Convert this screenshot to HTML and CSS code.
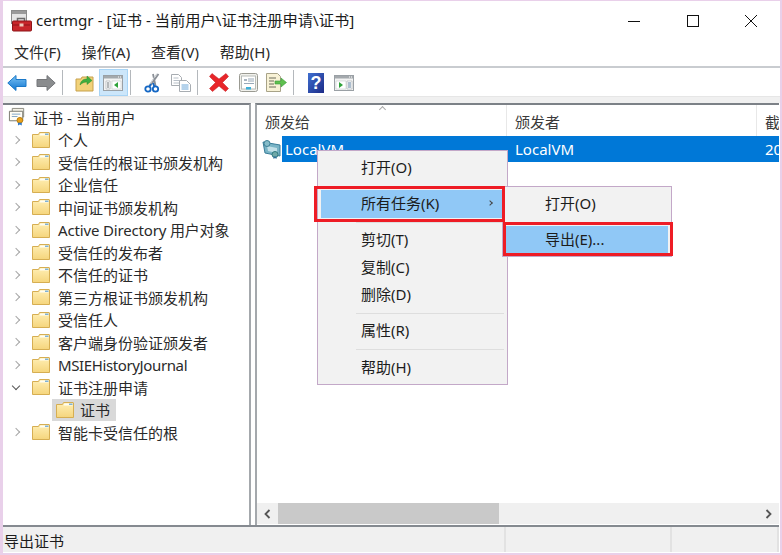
FILE: index.html
```html
<!DOCTYPE html>
<html lang="zh-CN">
<head>
<meta charset="utf-8">
<title>certmgr</title>
<link rel="stylesheet" href="styles.css">
</head>
<body>
<svg class="defs" width="0" height="0" aria-hidden="true">
  <defs>
    <linearGradient id="gf" x1="0" y1="0" x2="0" y2="1"><stop offset="0" stop-color="#ffefb5"/><stop offset="1" stop-color="#f5d57c"/></linearGradient>
    <linearGradient id="gb" x1="0" y1="0" x2="0" y2="1"><stop offset="0" stop-color="#7cc4f5"/><stop offset="1" stop-color="#0f74cf"/></linearGradient>
    <linearGradient id="gh" x1="0" y1="0" x2="1" y2="1"><stop offset="0" stop-color="#3f6fd0"/><stop offset="1" stop-color="#1c2a86"/></linearGradient>
    <symbol id="folder" viewBox="0 0 18 18">
      <path d="M.5 3.500h6l1-2h9.500a.5.5 0 0 1 .5.5v14.500H.5z" fill="url(#gf)" stroke="#d6ae52"/>
      <path d="M8.500 2.500h8v2h-9z" fill="#fffdf2"/>
      <path d="M13 2.500h3.500v1.500H13z" fill="#7fb2d6"/>
    </symbol>
    <symbol id="cert" viewBox="0 0 20 20">
      <path d="M4.500 1.500h12v9h-12z" fill="#f4f1e6" stroke="#8a8a80"/>
      <path d="M1.500 4.500h14v10h-14z" fill="#fffdf5" stroke="#77776d"/>
      <path d="M4 7.500h9M4 10h6" stroke="#7da4c8"/>
      <circle cx="12.500" cy="14" r="3" fill="#e9a21b" stroke="#b67a0a"/>
      <path d="M10.500 16.500v3l2-1 2 1v-3z" fill="#2f79c9"/>
    </symbol>
    <symbol id="certlist" viewBox="0 0 20 20">
      <path d="M1 3l17 3v11L3 14z" fill="#79b4c6" stroke="#3a7d99"/>
      <path d="M5 7l10 2v5L6 12z" fill="#c2e0e8"/>
      <circle cx="5" cy="4.500" r="3" fill="#86bcc9" stroke="#3f8096"/>
      <circle cx="13" cy="15.500" r="3" fill="#6fa8a8" stroke="#2f7a80"/>
      <path d="M11.500 17.500v2.500l1.500-1 1.500 1v-2.500z" fill="#2f6f99"/>
    </symbol>
    <symbol id="win-left" viewBox="0 0 20 16">
      <rect x=".5" y=".5" width="19" height="15" fill="#f3f3f3" stroke="#9aa0a5"/>
      <rect x="1" y="1" width="18" height="2.500" fill="#a4a9ad"/>
      <path d="M15 2h1M17 2h1" stroke="#fff"/>
      <path d="M3 6h4v8H3z" fill="#fff" stroke="#a6abb0" stroke-width=".6"/>
      <path d="M4 8h2M4 10h2M4 12h2" stroke="#6d7377"/>
      <path d="M9 6h9v8H9z" fill="#fff" stroke="#c8cccf" stroke-width=".6"/>
      <path d="M15 7v6l-4-3z" fill="#2fa33a"/>
    </symbol>
    <symbol id="win-right" viewBox="0 0 20 16">
      <rect x=".5" y=".5" width="19" height="15" fill="#f3f3f3" stroke="#9aa0a5"/>
      <rect x="1" y="1" width="18" height="2.500" fill="#a4a9ad"/>
      <path d="M15 2h1M17 2h1" stroke="#fff"/>
      <path d="M2 6h10v8H2z" fill="#fff" stroke="#c8cccf" stroke-width=".6"/>
      <path d="M5 7v6l4-3z" fill="#2fa33a"/>
      <path d="M13 6h5v8h-5z" fill="#fff" stroke="#a6abb0" stroke-width=".6"/>
      <path d="M14 8h3M14 10h3M14 12h3" stroke="#5d7f9f"/>
    </symbol>
  </defs>
</svg>

<div class="window">
  <header class="titlebar">
    <svg class="app-icon" width="21" height="22" viewBox="0 0 21 22">
      <rect x=".5" y=".5" width="15" height="13" fill="#e4e4e4" stroke="#8b8b8b"/>
      <rect x="1" y="1" width="14" height="3" fill="#9a9a9a"/>
      <path d="M6.500 11V8.500h7V11" fill="none" stroke="#6b6b6b" stroke-width="1.500"/>
      <path d="M2.500 11h17a1 1 0 0 1 1 1v8a1 1 0 0 1-1 1h-17a1 1 0 0 1-1-1v-8a1 1 0 0 1 1-1z" fill="#c8262a" stroke="#8d1518"/>
      <path d="M2 15h17" stroke="#8d1518"/>
      <rect x="8.500" y="13.500" width="4" height="3" fill="#f0c8b8"/>
    </svg>
    <span class="title-text">certmgr - [证书 - 当前用户\证书注册申请\证书]</span>
    <div class="controls">
      <svg width="12" height="12" viewBox="0 0 12 12"><path d="M0 6.500h12" stroke="#111"/></svg>
      <svg width="12" height="12" viewBox="0 0 12 12"><rect x=".5" y=".5" width="11" height="11" fill="none" stroke="#111"/></svg>
      <svg width="12" height="12" viewBox="0 0 12 12"><path d="M0 0l12 12M12 0L0 12" stroke="#111"/></svg>
    </div>
  </header>

  <nav class="menubar">
    <span>文件(F)</span><span>操作(A)</span><span>查看(V)</span><span>帮助(H)</span>
  </nav>

  <div class="toolbar">
    <span class="tool"><svg width="20" height="20" viewBox="0 0 20 20"><path d="M.8 10L9 2.500V6.500h10v7H9v4z" fill="url(#gb)" stroke="#1a78c8"/></svg></span>
    <span class="tool"><svg width="20" height="20" viewBox="0 0 20 20"><path d="M19.200 10L11 2.500V6.500H1v7h10v4z" fill="#8a8c8e" stroke="#75777a"/></svg></span>
    <i class="sep"></i>
    <span class="tool"><svg width="19" height="19" viewBox="0 0 19 19"><path d="M1 6h5l1-2h11v14H1z" fill="#f2d27a" stroke="#c7a14c"/><path d="M5 12c1-5 4-6 7-6V3l5 4.500-5 4V9c-3 0-5 1-7 3z" fill="#3fae3f" stroke="#2d8f2d" stroke-width=".5"/></svg></span>
    <span class="tool active"><svg width="20" height="16"><use href="#win-left"/></svg></span>
    <i class="sep"></i>
    <span class="tool"><svg width="16" height="20" viewBox="0 0 16 20"><path d="M14.500 1L6 13M9 1l1.500 7 1 5" stroke="#8b9097" stroke-width="1.800" fill="none"/><path d="M13 .5L5 12" stroke="#c8ccd0"/><circle cx="4" cy="16" r="2.700" fill="#fff" stroke="#1467c4" stroke-width="1.800"/><circle cx="11.500" cy="16" r="2.700" fill="#fff" stroke="#1467c4" stroke-width="1.800"/><path d="M5 14l2-3M10.500 14L9 10" stroke="#1467c4" stroke-width="1.800"/></svg></span>
    <span class="tool"><svg width="20" height="18" viewBox="0 0 20 18"><path d="M.5.500h7l3 3v8H.5z" fill="#fff" stroke="#a8adb2"/><path d="M2.500 4h5M2.500 6.500h6M2.500 9h6" stroke="#b8c0c8"/><path d="M8.500 6.500h7l4 4v7h-11z" fill="#fff" stroke="#a8adb2"/><path d="M10.500 11h7M10.500 13h7M10.500 15h7" stroke="#6aa6d8"/></svg></span>
    <i class="sep"></i>
    <span class="tool"><svg width="20" height="19" viewBox="0 0 20 19"><path d="M3 .5L10 6l7-5.500 2.500 3L13.500 9.500l6 6-3 3L10 13l-6.500 5.500-3-3 6-6-6-6z" fill="#e8262a" stroke="#c01a1e" stroke-width=".5"/></svg></span>
    <span class="tool"><svg width="19" height="19" viewBox="0 0 19 19"><rect x=".5" y=".5" width="18" height="18" rx="2" fill="#f1f1ec" stroke="#9a9a92"/><rect x="2.500" y="3" width="14" height="13" fill="#fff" stroke="#b8bcb8"/><path d="M5 6h3v2H5z" fill="#a8b4c0"/><path d="M9 6h6M9 8h6M5 10.500h10" stroke="#98a8b8"/><rect x="7" y="14" width="5" height="2.500" fill="#3fb0d8"/></svg></span>
    <span class="tool"><svg width="21" height="19" viewBox="0 0 21 19"><path d="M.5.500h11l3 3v15H.5z" fill="#f8f2d6" stroke="#a8a388"/><path d="M3 5h7M3 8h5M3 11h5M3 14h7" stroke="#6d6d5c"/><path d="M9 8h6V5l5.500 4.500L15 14v-3H9z" fill="#5fc04f" stroke="#3c9a3c" stroke-width=".6"/></svg></span>
    <i class="sep"></i>
    <span class="tool"><svg width="16" height="20" viewBox="0 0 16 20"><rect width="16" height="20" fill="url(#gh)"/><text class="help-q" x="8" y="16" text-anchor="middle">?</text></svg></span>
    <span class="tool"><svg width="20" height="16"><use href="#win-right"/></svg></span>
  </div>

  <div class="strip"></div>

  <main class="panes">
    <aside class="tree">
      <div class="row root"><svg width="19" height="19"><use href="#cert"/></svg><span>证书 - 当前用户</span></div>
      <div class="row"><i class="chev"></i><svg width="18" height="18"><use href="#folder"/></svg><span>个人</span></div>
      <div class="row"><i class="chev"></i><svg width="18" height="18"><use href="#folder"/></svg><span>受信任的根证书颁发机构</span></div>
      <div class="row"><i class="chev"></i><svg width="18" height="18"><use href="#folder"/></svg><span>企业信任</span></div>
      <div class="row"><i class="chev"></i><svg width="18" height="18"><use href="#folder"/></svg><span>中间证书颁发机构</span></div>
      <div class="row"><i class="chev"></i><svg width="18" height="18"><use href="#folder"/></svg><span class="tight">Active Directory 用户对象</span></div>
      <div class="row"><i class="chev"></i><svg width="18" height="18"><use href="#folder"/></svg><span>受信任的发布者</span></div>
      <div class="row"><i class="chev"></i><svg width="18" height="18"><use href="#folder"/></svg><span>不信任的证书</span></div>
      <div class="row"><i class="chev"></i><svg width="18" height="18"><use href="#folder"/></svg><span>第三方根证书颁发机构</span></div>
      <div class="row"><i class="chev"></i><svg width="18" height="18"><use href="#folder"/></svg><span>受信任人</span></div>
      <div class="row"><i class="chev"></i><svg width="18" height="18"><use href="#folder"/></svg><span>客户端身份验证颁发者</span></div>
      <div class="row"><i class="chev"></i><svg width="18" height="18"><use href="#folder"/></svg><span class="tighter">MSIEHistoryJournal</span></div>
      <div class="row"><i class="chev open"></i><svg width="18" height="18"><use href="#folder"/></svg><span>证书注册申请</span></div>
      <div class="row child"><div class="selected"><svg width="18" height="18"><use href="#folder"/></svg><span>证书</span></div></div>
      <div class="row"><i class="chev"></i><svg width="18" height="18"><use href="#folder"/></svg><span>智能卡受信任的根</span></div>
    </aside>

    <section class="list">
      <div class="list-head">
        <span class="col c1">颁发给<i class="sort"></i></span>
        <span class="col c2">颁发者</span>
        <span class="col c3">截止日期</span>
      </div>
      <div class="list-row">
        <svg class="row-icon" width="20" height="20"><use href="#certlist"/></svg>
        <div class="row-sel">
          <span class="cell c1b">LocalVM</span>
          <span class="cell c2b">LocalVM</span>
          <span class="cell c3b">2038/1/1</span>
        </div>
      </div>
      <div class="list-body"></div>
      <div class="hscroll">
        <span class="arrow"><svg width="9" height="10" viewBox="0 0 9 10"><path d="M6.500 1L2.500 5l4 4" fill="none" stroke="#555" stroke-width="1.800"/></svg></span>
        <span class="thumb"></span>
        <span class="track"></span>
        <span class="arrow"><svg width="9" height="10" viewBox="0 0 9 10"><path d="M2.500 1l4 4-4 4" fill="none" stroke="#555" stroke-width="1.800"/></svg></span>
      </div>
    </section>
  </main>

  <footer class="status">
    <span class="s1">导出证书</span><span class="s2"></span><span class="s3"></span>
  </footer>
</div>

<div class="menu main-menu">
  <div class="item">打开(O)</div>
  <hr>
  <div class="item hot boxed-main">所有任务(K)<i class="more"></i></div>
  <hr>
  <div class="item">剪切(T)</div>
  <div class="item">复制(C)</div>
  <div class="item">删除(D)</div>
  <hr>
  <div class="item">属性(R)</div>
  <hr class="last-sep">
  <div class="item">帮助(H)</div>
</div>

<div class="menu sub-menu">
  <div class="item">打开(O)</div>
  <hr>
  <div class="item hot boxed-sub">导出(E)...</div>
</div>
</body>
</html>
```

FILE: styles.css
```css
* { box-sizing: border-box; }
html, body { margin: 0; height: 555px; overflow: hidden; }
body {
  background: #e9d0ea;
  font-family: "Noto Sans", "Noto Sans CJK SC", sans-serif;
  font-size: 15px;
  color: #1c1c1c;
  padding: 1px 2px 2px 3px;
  position: relative;
}
.defs { position: absolute; }
.window {
  height: 552px;
  background: #fff;
  display: flex;
  flex-direction: column;
}
.titlebar {
  height: 39px;
  flex: none;
  display: flex;
  align-items: center;
  padding-left: 8px;
}
.app-icon { flex: none; margin-right: 5px; margin-top: 1px; }
.title-text { flex: 1; line-height: 39px; white-space: nowrap; font-size: 15.25px; margin-left: -1px; }
.controls {
  display: flex;
  gap: 46.5px;
  padding-right: 23px;
  align-items: center;
}
.menubar {
  height: 28px;
  flex: none;
  display: flex;
  gap: 20.8px;
  padding: 0 0 3px 11px;
  align-items: center;
  border-bottom: 2px solid #c9ccd0;
  color: #2a2a2a;
}
.toolbar {
  height: 28px;
  flex: none;
  display: flex;
  align-items: center;
  padding-top: 1px;
}
.tool {
  width: 28.7px;
  height: 27px;
  flex: none;
  display: flex;
  align-items: center;
  justify-content: center;
}
.tool.active {
  background: #cce6fa;
  border: 1px solid #a8d4f5;
}
.sep {
  width: 1px;
  height: 25px;
  background: #b4b8bc;
  margin: 0 7px 0 2px;
  flex: none;
}
.help-q {
  fill: #fff;
  font: bold 18px "Liberation Sans", sans-serif;
}
.strip {
  height: 7px;
  flex: none;
  background: #f0f0f0;
  border-top: 1px solid #e6e6e6;
}
.panes {
  flex: 1;
  min-height: 0;
  display: flex;
  gap: 4px;
  border-bottom: 2px solid #858a90;
  margin-right: 1px;
}
.tree {
  width: 248px;
  flex: none;
  border-top: 2px solid #7c8187;
  border-right: 2px solid #a4a8ac;
  padding-top: 1px;
}
.row {
  height: 22.5px;
  display: flex;
  align-items: center;
  color: #2a2a2a;
  white-space: nowrap;
  padding-left: 2px;
}
.row svg { flex: none; margin-left: 2px; }
.row span { margin-left: 8px; }
.row.root { padding-left: 5px; gap: 6px; }
.row.root svg { margin: -1px 0 0; }
.row.root span { margin-left: 0; }
.tight { letter-spacing: -.16px; }
.tighter { letter-spacing: -.38px; }
.chev {
  width: 6px;
  height: 6px;
  margin: 0 11px 0 8px;
  border-top: 1.2px solid #a6a6a6;
  border-right: 1.2px solid #a6a6a6;
  transform: rotate(45deg);
  flex: none;
}
.chev.open {
  margin-top: -3px;
  border-color: #555;
  transform: rotate(135deg);
}
.row.child { padding-left: 49px; }
.selected {
  height: 22px;
  width: 64px;
  background: #d9d9d9;
  display: flex;
  align-items: center;
  padding-left: 2px;
}
.selected span { margin-left: 6px; }
.list {
  flex: 1;
  min-width: 0;
  display: flex;
  flex-direction: column;
  border-top: 2px solid #7c8187;
  border-left: 2px solid #a4a8ac;
  overflow: hidden;
}
.list-head {
  height: 31px;
  flex: none;
  display: flex;
  color: #3a3a3a;
}
.col {
  flex: none;
  padding: 4px 0 0 8px;
  line-height: 27px;
  white-space: nowrap;
  border-right: 1px solid #e8e8e8;
  position: relative;
}
.c1 { width: 250px; }
.c2 { width: 250px; }
.c3 { width: 100px; border-right: 0; }
.sort {
  position: absolute;
  left: 123px;
  top: 2px;
  width: 5px;
  height: 5px;
  border-top: 1px solid #aaa;
  border-left: 1px solid #aaa;
  transform: rotate(45deg);
}
.list-row {
  height: 26px;
  flex: none;
  display: flex;
  align-items: center;
  padding-left: 5px;
}
.row-icon { flex: none; }
.row-sel {
  flex: 1;
  height: 26px;
  background: #0078d7;
  color: #fff;
  display: flex;
  align-items: center;
  white-space: nowrap;
  overflow: hidden;
}
.cell { flex: none; padding-left: 3px; }
.c1b { width: 230px; }
.c2b { width: 250px; }
.list-body { flex: 1; }
.hscroll {
  height: 21px;
  flex: none;
  display: flex;
  background: #f0f0f0;
  margin-bottom: 1px;
}
.arrow {
  width: 21px;
  flex: none;
  display: flex;
  align-items: center;
  justify-content: center;
}
.thumb { width: 221px; flex: none; background: #c9c9c9; }
.track { flex: 1; }
.status {
  height: 25px;
  flex: none;
  display: flex;
  background: #f0f0f0;
  margin-bottom: 1px;
  margin-right: 1px;
}
.status span { border-right: 2px solid #e2e2e2; padding-left: 1px; }
.s1 { width: 503px; line-height: 28px; }
.s2 { width: 166px; }
.s3 { flex: 1; }
.menu {
  position: absolute;
  background: #f2f2f2;
  border: 1px solid #c3a8c8;
  padding: 3px;
  color: #1c1c1c;
}
.main-menu { left: 317px; top: 150px; width: 191px; height: 235px; }
.sub-menu { left: 502px; top: 186px; width: 170px; height: 71px; z-index: 1; }
.item {
  height: 27.5px;
  line-height: 27px;
  position: relative;
  white-space: nowrap;
  padding-left: 40px;
}
.sub-menu .item { padding-left: 39px; }
.menu hr {
  height: 1px;
  margin: 4px 0 3.5px 35px;
  border: 0;
  background: #dedede;
}
.menu hr.last-sep { margin-bottom: 4.5px; }
.hot { background: #90c8f6; }
.more {
  position: absolute;
  left: 167px;
  top: 11px;
  width: 4px;
  height: 4px;
  border-top: 1px solid #444;
  border-right: 1px solid #444;
  transform: rotate(45deg);
}
.boxed-main::after,
.boxed-sub::after {
  content: "";
  position: absolute;
  border: 3px solid #ee1c25;
  box-sizing: border-box;
}
.boxed-main::after { left: -7px; top: -4px; width: 191px; height: 36px; z-index: 2; }
.boxed-sub::after { left: -3px; top: -4px; width: 170px; height: 34px; }
```
